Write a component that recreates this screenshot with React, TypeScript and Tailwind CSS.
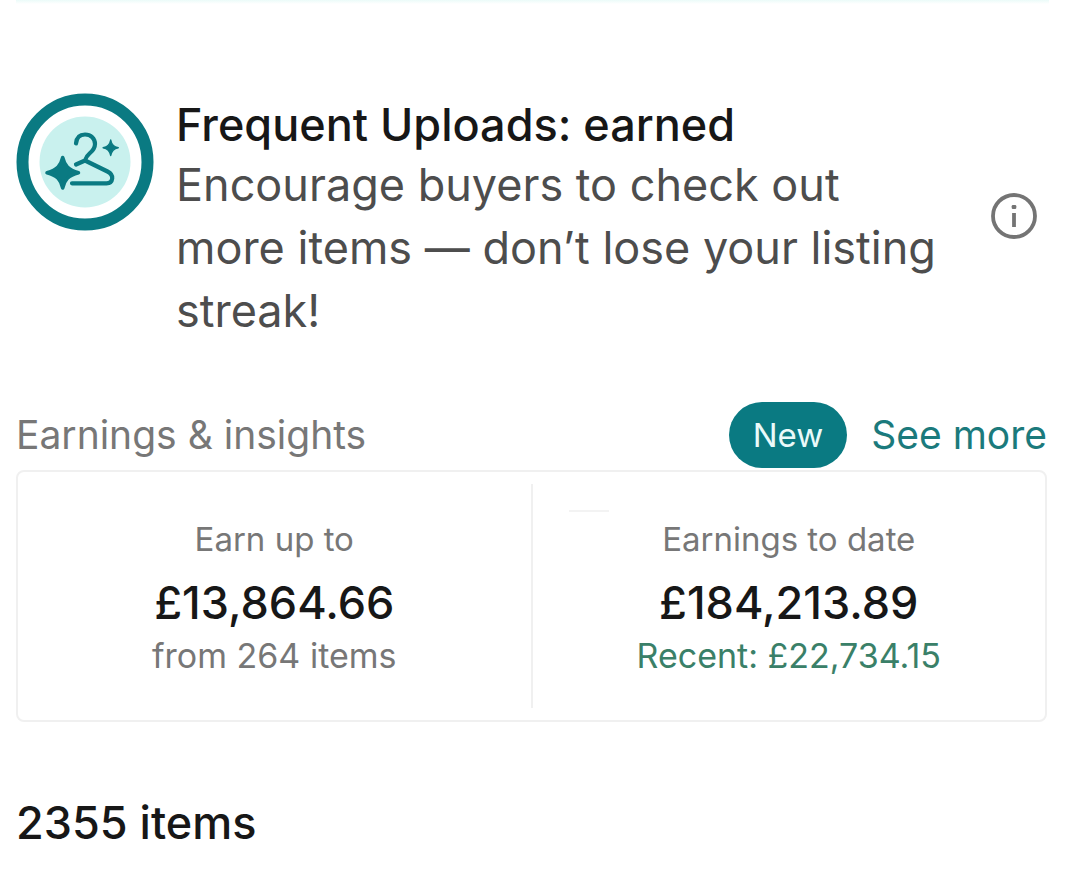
function HangerBadge() {
  return (
    <svg viewBox="0 0 138 138" className="size-[138px] shrink-0" aria-hidden="true">
      <circle cx="69" cy="69" r="62.5" fill="#fff" stroke="#0a7a82" strokeWidth="12" />
      <circle cx="69" cy="69" r="45.5" fill="#c9f1ee" />
      <path
        d="M60 50.5C60.5 44.5 64 41.5 69 41.5C75 41.5 79 45.5 79 51C79 55.5 76.5 58 73.5 60.5C71 62.5 70 64.5 69 67.5L60 71.5M69 67.5L91.5 78.5C95 80.3 96.5 82.5 96.2 85.5C95.8 88.8 94 90.3 90.5 90.3H56"
        fill="none"
        stroke="#0a7a82"
        strokeWidth="4.2"
        strokeLinecap="round"
        strokeLinejoin="round"
      />
      <path
        d="M46.7 64.5C48.6 72.5 52 77 62.5 79.7C52 82.4 48.6 87 46.7 95C44.8 87 41.5 82.4 31 79.7C41.5 77 44.8 72.5 46.7 64.5Z"
        fill="#0a7a82"
        stroke="#0a7a82"
        strokeWidth="3.5"
        strokeLinejoin="round"
      />
      <path
        d="M94.7 47C95.5 51.7 97.5 53.8 102.3 54.7C97.5 55.6 95.5 57.8 94.7 62.5C93.9 57.8 91.9 55.6 87.1 54.7C91.9 53.8 93.9 51.7 94.7 47Z"
        fill="#0a7a82"
        stroke="#0a7a82"
        strokeWidth="1.4"
        strokeLinejoin="round"
      />
    </svg>
  );
}

function InfoIcon() {
  return (
    <svg viewBox="0 0 46 46" className="size-[46px]" aria-hidden="true">
      <circle cx="23" cy="23" r="21" fill="none" stroke="#747474" strokeWidth="3.8" />
      <rect x="20.7" y="12" width="4.6" height="4" rx="1.2" fill="#747474" />
      <path d="M23 20v14" stroke="#747474" strokeWidth="3.8" />
    </svg>
  );
}

type StatProps = {
  label: string;
  amount: string;
  note: string;
  noteClass: string;
  marked?: boolean;
};

function Stat({ label, amount, note, noteClass, marked }: StatProps) {
  return (
    <div className="flex-1 pb-9 text-center">
      <div className="flex h-7 items-end pl-9">
        {marked && <div className="h-0.5 w-10 bg-[#f3f3f3]" />}
      </div>
      <p className="text-[33px] leading-[54px] text-[#777]">{label}</p>
      <p className="text-[45px] leading-[74px] font-medium text-[#171717]">{amount}</p>
      <p className={`text-[34px] leading-8 ${noteClass}`}>{note}</p>
    </div>
  );
}

export default function App() {
  return (
    <div className="min-h-screen bg-white font-['Inter',sans-serif]">
      <div className="mr-6 ml-4 h-1 bg-linear-to-b from-[#ebfbf9] to-white" />
      <main className="pt-[89px] pr-[26px] pb-8 pl-4">
        <section className="flex items-start">
          <HangerBadge />
          <div className="ml-[22px] flex-1">
            <h2 className="text-[45px] leading-[64px] font-medium text-[#171717]">
              Frequent Uploads: earned
            </h2>
            <p className="-mt-1 max-w-[770px] text-[45px] leading-[63px] text-[#4d4d4d]">
              Encourage buyers to check out more items — don’t lose your listing streak!
            </p>
          </div>
          <button type="button" aria-label="More information" className="mt-[100px] mr-2.5">
            <InfoIcon />
          </button>
        </section>

        <section className="mt-[58px]">
          <div className="flex items-center">
            <h3 className="flex-1 text-[39px] leading-[70px] text-[#777]">Earnings &amp; insights</h3>
            <span className="rounded-full bg-[#0a7a82] px-6 text-[33px] leading-[66px] text-[#eafafa]">
              New
            </span>
            <a href="#earnings" className="ml-6 text-[39px] text-[#1b7a7c]">
              See more
            </a>
          </div>
          <div className="flex rounded-lg border-2 border-[#f0f0f0] py-3">
            <Stat
              label="Earn up to"
              amount="£13,864.66"
              note="from 264 items"
              noteClass="text-[#777]"
            />
            <div className="w-0.5 bg-[#f0f0f0]" />
            <Stat
              label="Earnings to date"
              amount="£184,213.89"
              note="Recent: £22,734.15"
              noteClass="text-[#3a8068]"
              marked
            />
          </div>
        </section>

        <h2 className="mt-[70px] text-[45px] leading-[62px] font-medium text-[#171717]">2355 items</h2>
      </main>
    </div>
  );
}
